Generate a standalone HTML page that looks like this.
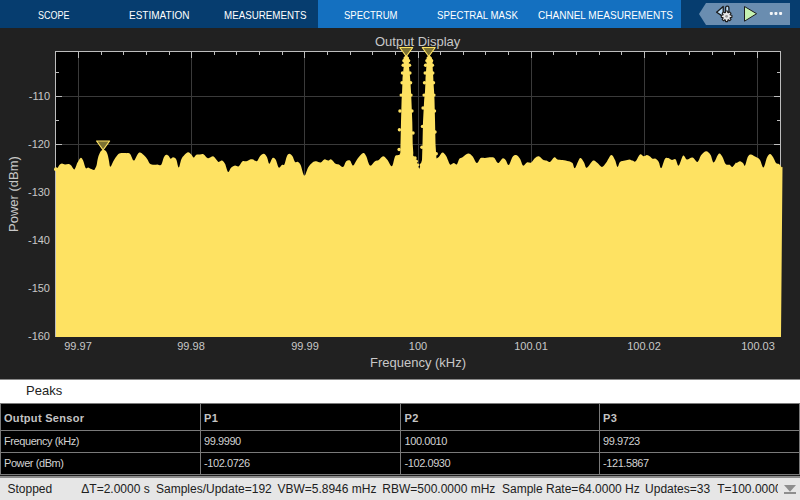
<!DOCTYPE html>
<html><head><meta charset="utf-8">
<style>
*{margin:0;padding:0;box-sizing:border-box}
html,body{width:800px;height:500px;overflow:hidden;background:#212121;font-family:"Liberation Sans",sans-serif}
#hdr{position:absolute;left:0;top:0;width:800px;height:28px;background:#063d6f}
#hdr .lt{position:absolute;left:318px;top:0;width:363px;height:28px;background:#1470c0}
.tab{position:absolute;top:8px;color:#fff;font-size:11px;line-height:14px;white-space:nowrap;transform-origin:0 0}
.lbl{position:absolute;color:#c8c8c8;font-size:11px;line-height:12px;white-space:nowrap}
.yl{text-align:right;width:40px;left:10px}
.xl{text-align:center;width:60px}
#peaks{position:absolute;left:0;top:379px;width:800px;height:24px;background:#fff;border-top:1px solid #8a8a8a}
#peaks span{position:absolute;left:26px;top:3px;font-size:13px;color:#222}
#tbl{position:absolute;left:0;top:403px;width:800px;height:75px;background:#000}
.tc{position:absolute;color:#d2d2d2;font-size:11px;white-space:nowrap;line-height:12px;letter-spacing:-0.42px}
.b{font-weight:bold;color:#c4c4c4;letter-spacing:0.3px}
#status{position:absolute;left:0;top:478px;width:800px;height:22px;background:#e6e6e6;font-size:12px;color:#202020}
#status span{position:absolute;top:4px;white-space:pre;line-height:14px}
</style></head><body>
<div id="hdr">
 <div class="lt"></div>
 <div class="tab" style="left:37.5px;transform:scaleX(0.818)">SCOPE</div>
 <div class="tab" style="left:128.5px;transform:scaleX(0.911)">ESTIMATION</div>
 <div class="tab" style="left:223.5px;transform:scaleX(0.888)">MEASUREMENTS</div>
 <div class="tab" style="left:344px;transform:scaleX(0.867)">SPECTRUM</div>
 <div class="tab" style="left:436.5px;transform:scaleX(0.881)">SPECTRAL MASK</div>
 <div class="tab" style="left:538px;transform:scaleX(0.911)">CHANNEL MEASUREMENTS</div>
 <svg style="position:absolute;left:0;top:0" width="800" height="28">
  <polygon points="699,14 706,3 790,3 790,25 706,25" fill="#6a8db0"/>
  <g stroke="#1c1c1c" stroke-width="1" stroke-linejoin="round">
   <polygon points="716.6,12.2 723.2,6.5 723.2,16.6" fill="#bfe0fa" stroke-width="1.3"/>
   <rect x="725.6" y="6.2" width="3.3" height="7.2" rx="1.5" fill="#bfe0fa" stroke-width="1.3"/>
   <polygon points="725.36,12.60 725.57,11.00 727.63,11.00 727.84,12.60 728.34,12.81 729.62,11.82 731.08,13.28 730.09,14.56 730.30,15.06 731.90,15.27 731.90,17.33 730.30,17.54 730.09,18.04 731.08,19.32 729.62,20.78 728.34,19.79 727.84,20.00 727.63,21.60 725.57,21.60 725.36,20.00 724.86,19.79 723.58,20.78 722.12,19.32 723.11,18.04 722.90,17.54 721.30,17.33 721.30,15.27 722.90,15.06 723.11,14.56 722.12,13.28 723.58,11.82 724.86,12.81" fill="#e8e8e8" stroke-width="1.1"/>
   <circle cx="726.6" cy="16.3" r="1.4" fill="#9a9a9a" stroke="none"/>
   <polygon points="744.5,6.5 756.6,13.7 744.5,21.2" fill="#c6f3b2"/>
  </g>
  <g fill="#f4f6f8"><rect x="769.8" y="11.9" width="3" height="3" rx="0.8"/><rect x="774.4" y="11.9" width="3" height="3" rx="0.8"/><rect x="779.1" y="11.9" width="3" height="3" rx="0.8"/></g>
 </svg>
</div>
<svg style="position:absolute;left:0;top:28px" width="800" height="351" viewBox="0 28 800 351">
 <rect x="55" y="51" width="725" height="286" fill="#000"/>
 <path d="M78.5 51V337M191.5 51V337M304.5 51V337M418.5 51V337M531.5 51V337M644.5 51V337M757.5 51V337M55 96.5H780M55 144.5H780M55 192.5H780M55 240.5H780M55 288.5H780" stroke="#3a3a3a" stroke-width="1"/>
 <rect x="55.5" y="51.5" width="725" height="285" fill="none" stroke="#bdbdbd" stroke-width="1"/>
 <path d="M78.5 52v6M101.5 52v3M123.5 52v3M146.5 52v3M169.5 52v3M191.5 52v6M214.5 52v3M236.5 52v3M259.5 52v3M282.5 52v3M304.5 52v6M327.5 52v3M350.5 52v3M372.5 52v3M395.5 52v3M418.5 52v6M440.5 52v3M463.5 52v3M485.5 52v3M508.5 52v3M531.5 52v6M553.5 52v3M576.5 52v3M599.5 52v3M621.5 52v3M644.5 52v6M666.5 52v3M689.5 52v3M712.5 52v3M734.5 52v3M757.5 52v6M56 336.5h6M780 336.5h-6M56 312.5h3M780 312.5h-3M56 288.5h6M780 288.5h-6M56 264.5h3M780 264.5h-3M56 240.5h6M780 240.5h-6M56 216.5h3M780 216.5h-3M56 192.5h6M780 192.5h-6M56 168.5h3M780 168.5h-3M56 144.5h6M780 144.5h-6M56 120.5h3M780 120.5h-3M56 96.5h6M780 96.5h-6M56 72.5h3M780 72.5h-3" stroke="#bdbdbd" stroke-width="1"/>
 <path d="M56 337L56 168.75L55.00 168.75C55.42 168.65 56.77 168.75 57.50 168.12C58.23 167.50 58.65 165.77 59.38 165.00C60.10 164.23 60.94 163.60 61.88 163.50C62.81 163.40 63.85 164.29 65.00 164.38C66.15 164.46 67.71 163.79 68.75 164.00C69.79 164.21 70.31 164.73 71.25 165.62C72.19 166.52 73.33 169.90 74.38 169.38C75.42 168.85 76.46 164.42 77.50 162.50C78.54 160.58 79.69 158.19 80.62 157.88C81.56 157.56 82.29 158.92 83.12 160.62C83.96 162.33 84.79 166.98 85.62 168.12C86.46 169.27 87.29 167.40 88.12 167.50C88.96 167.60 89.69 168.33 90.62 168.75C91.56 169.17 93.09 169.89 93.75 170.00C94.41 170.11 94.14 170.15 94.60 169.40C95.06 168.65 96.02 167.07 96.50 165.50C96.98 163.93 97.17 161.58 97.50 160.00C97.83 158.42 98.08 157.25 98.50 156.00C98.92 154.75 99.50 153.42 100.00 152.50C100.50 151.58 100.93 150.95 101.50 150.50C102.07 150.05 102.77 149.80 103.40 149.80C104.03 149.80 104.73 150.05 105.30 150.50C105.87 150.95 106.35 151.58 106.80 152.50C107.25 153.42 107.63 154.58 108.00 156.00C108.37 157.42 108.60 159.20 109.00 161.00C109.40 162.80 109.61 166.86 110.40 166.80C111.19 166.74 112.57 162.59 113.75 160.62C114.93 158.66 116.25 156.25 117.50 155.00C118.75 153.75 119.79 153.44 121.25 153.12C122.71 152.81 124.79 153.02 126.25 153.12C127.71 153.23 128.75 152.50 130.00 153.75C131.25 155.00 132.50 160.52 133.75 160.62C135.00 160.73 136.46 155.73 137.50 154.38C138.54 153.02 138.96 152.40 140.00 152.50C141.04 152.60 142.50 153.85 143.75 155.00C145.00 156.15 146.46 157.92 147.50 159.38C148.54 160.83 148.96 162.85 150.00 163.75C151.04 164.65 152.50 164.65 153.75 164.75C155.00 164.85 156.25 164.38 157.50 164.38C158.75 164.38 160.21 165.90 161.25 164.75C162.29 163.60 162.92 159.17 163.75 157.50C164.58 155.83 165.42 155.00 166.25 154.75C167.08 154.50 168.02 155.33 168.75 156.00C169.48 156.67 169.90 158.54 170.62 158.75C171.35 158.96 172.19 157.15 173.12 157.25C174.06 157.35 175.31 157.67 176.25 159.38C177.19 161.08 177.92 167.50 178.75 167.50C179.58 167.50 180.31 161.46 181.25 159.38C182.19 157.29 183.23 156.19 184.38 155.00C185.52 153.81 186.98 152.35 188.12 152.25C189.27 152.15 190.31 153.50 191.25 154.38C192.19 155.25 192.92 157.44 193.75 157.50C194.58 157.56 195.21 155.27 196.25 154.75C197.29 154.23 198.75 154.44 200.00 154.38C201.25 154.31 202.50 153.75 203.75 154.38C205.00 155.00 206.46 157.60 207.50 158.12C208.54 158.65 209.06 157.81 210.00 157.50C210.94 157.19 212.08 155.94 213.12 156.25C214.17 156.56 215.31 158.44 216.25 159.38C217.19 160.31 217.81 161.67 218.75 161.88C219.69 162.08 220.83 160.31 221.88 160.62C222.92 160.94 223.96 161.88 225.00 163.75C226.04 165.62 227.08 171.25 228.12 171.88C229.17 172.50 230.10 168.54 231.25 167.50C232.40 166.46 233.75 165.83 235.00 165.62C236.25 165.42 237.50 166.98 238.75 166.25C240.00 165.52 241.25 162.08 242.50 161.25C243.75 160.42 245.00 161.56 246.25 161.25C247.50 160.94 248.85 159.69 250.00 159.38C251.15 159.06 251.98 159.06 253.12 159.38C254.27 159.69 255.73 161.77 256.88 161.25C258.02 160.73 258.85 157.50 260.00 156.25C261.15 155.00 262.60 153.65 263.75 153.75C264.90 153.85 265.94 155.21 266.88 156.88C267.81 158.54 268.44 163.54 269.38 163.75C270.31 163.96 271.46 158.85 272.50 158.12C273.54 157.40 274.58 157.81 275.62 159.38C276.67 160.94 277.71 166.56 278.75 167.50C279.79 168.44 280.94 165.52 281.88 165.00C282.81 164.48 283.54 165.83 284.38 164.38C285.21 162.92 286.04 158.02 286.88 156.25C287.71 154.48 288.44 153.75 289.38 153.75C290.31 153.75 291.56 154.90 292.50 156.25C293.44 157.60 294.06 160.94 295.00 161.88C295.94 162.81 297.19 161.35 298.12 161.88C299.06 162.40 299.58 162.71 300.62 165.00C301.67 167.29 303.12 175.21 304.38 175.62C305.62 176.04 306.77 169.69 308.12 167.50C309.48 165.31 311.15 163.54 312.50 162.50C313.85 161.46 314.90 161.25 316.25 161.25C317.60 161.25 319.27 162.81 320.62 162.50C321.98 162.19 323.12 159.69 324.38 159.38C325.62 159.06 326.98 160.62 328.12 160.62C329.27 160.62 330.00 158.85 331.25 159.38C332.50 159.90 334.38 162.92 335.62 163.75C336.88 164.58 337.50 163.85 338.75 164.38C340.00 164.90 341.88 167.40 343.12 166.88C344.38 166.35 345.10 162.29 346.25 161.25C347.40 160.21 348.85 159.90 350.00 160.62C351.15 161.35 351.88 165.94 353.12 165.62C354.38 165.31 355.83 160.83 357.50 158.75C359.17 156.67 361.67 153.54 363.12 153.12C364.58 152.71 365.10 154.17 366.25 156.25C367.40 158.33 368.54 164.79 370.00 165.62C371.46 166.46 373.54 162.19 375.00 161.25C376.46 160.31 377.40 160.83 378.75 160.00C380.10 159.17 381.67 156.25 383.12 156.25C384.58 156.25 386.04 158.33 387.50 160.00C388.96 161.67 390.62 166.83 391.88 166.25C393.12 165.67 394.06 158.34 395.00 156.50C395.94 154.66 396.78 155.45 397.50 155.20C398.22 154.95 399.00 155.03 399.30 155.00L400.30 153.00L400.50 144.00L401.00 122.00L401.60 100.00L402.10 91.60L402.40 83.00L402.50 78.00L403.00 73.00L403.80 66.00L403.70 61.00L403.50 57.50L405.00 56.00L407.30 56.00L409.00 57.50L408.90 61.00L408.90 66.00L409.70 73.00L410.10 78.00L410.50 83.00L411.00 91.60L411.40 100.00L412.30 122.00L412.70 144.00L413.30 153.00L413.12 155.62C413.54 156.15 414.90 157.19 415.62 158.75C416.35 160.31 416.88 163.33 417.50 165.00C418.12 166.67 419.06 168.12 419.38 168.75L422.00 160.00L422.50 144.00L423.00 122.00L424.15 100.00L425.00 91.60L425.40 83.00L425.50 78.00L425.90 73.00L426.40 66.00L426.70 61.00L426.50 57.50L428.00 56.00L430.20 56.00L431.80 57.50L432.50 61.00L432.60 66.00L433.00 73.00L433.30 78.00L433.50 83.00L434.10 91.60L434.50 100.00L435.05 122.00L435.50 144.00L436.00 152.00L436.50 158.50C436.88 158.25 437.80 158.00 438.80 157.00C439.80 156.00 441.26 152.62 442.50 152.50C443.74 152.38 445.00 154.27 446.25 156.25C447.50 158.23 448.75 163.23 450.00 164.38C451.25 165.52 452.60 163.12 453.75 163.12C454.90 163.12 455.94 165.10 456.88 164.38C457.81 163.65 458.44 159.94 459.38 158.75C460.31 157.56 461.04 158.12 462.50 157.25C463.96 156.38 466.46 153.67 468.12 153.50C469.79 153.33 471.04 154.65 472.50 156.25C473.96 157.85 475.52 162.81 476.88 163.12C478.23 163.44 479.27 159.00 480.62 158.12C481.98 157.25 483.23 158.02 485.00 157.88C486.77 157.73 489.69 157.21 491.25 157.25C492.81 157.29 493.23 157.15 494.38 158.12C495.52 159.10 496.77 163.06 498.12 163.12C499.48 163.19 501.25 159.02 502.50 158.50C503.75 157.98 504.58 158.92 505.62 160.00C506.67 161.08 507.60 165.52 508.75 165.00C509.90 164.48 511.25 158.54 512.50 156.88C513.75 155.21 515.00 154.69 516.25 155.00C517.50 155.31 518.85 156.98 520.00 158.75C521.15 160.52 521.98 165.00 523.12 165.62C524.27 166.25 525.52 163.02 526.88 162.50C528.23 161.98 529.90 163.23 531.25 162.50C532.60 161.77 533.75 159.17 535.00 158.12C536.25 157.08 537.40 155.98 538.75 156.25C540.10 156.52 541.88 159.02 543.12 159.75C544.38 160.48 545.10 160.27 546.25 160.62C547.40 160.98 548.65 162.44 550.00 161.88C551.35 161.31 553.12 157.67 554.38 157.25C555.62 156.83 556.15 158.92 557.50 159.38C558.85 159.83 560.62 159.69 562.50 160.00C564.38 160.31 567.08 160.73 568.75 161.25C570.42 161.77 571.46 161.98 572.50 163.12C573.54 164.27 573.75 168.96 575.00 168.12C576.25 167.29 578.54 159.17 580.00 158.12C581.46 157.08 582.60 160.27 583.75 161.88C584.90 163.48 585.31 167.96 586.88 167.75C588.44 167.54 591.35 161.40 593.12 160.62C594.90 159.85 596.04 162.08 597.50 163.12C598.96 164.17 600.42 166.98 601.88 166.88C603.33 166.77 604.69 164.48 606.25 162.50C607.81 160.52 609.79 155.42 611.25 155.00C612.71 154.58 613.96 158.02 615.00 160.00C616.04 161.98 616.67 166.56 617.50 166.88C618.33 167.19 618.75 162.92 620.00 161.88C621.25 160.83 623.44 161.04 625.00 160.62C626.56 160.21 628.12 159.38 629.38 159.38C630.62 159.38 631.46 160.31 632.50 160.62C633.54 160.94 634.38 162.29 635.62 161.25C636.88 160.21 638.65 155.21 640.00 154.38C641.35 153.54 642.60 156.15 643.75 156.25C644.90 156.35 645.83 154.96 646.88 155.00C647.92 155.04 649.06 155.88 650.00 156.50C650.94 157.12 651.56 158.38 652.50 158.75C653.44 159.12 654.58 158.23 655.62 158.75C656.67 159.27 657.81 160.31 658.75 161.88C659.69 163.44 660.21 168.65 661.25 168.12C662.29 167.60 663.85 160.42 665.00 158.75C666.15 157.08 666.98 157.92 668.12 158.12C669.27 158.33 670.62 159.79 671.88 160.00C673.12 160.21 674.48 158.44 675.62 159.38C676.77 160.31 677.50 166.25 678.75 165.62C680.00 165.00 681.77 156.67 683.12 155.62C684.48 154.58 685.31 159.06 686.88 159.38C688.44 159.69 690.73 157.08 692.50 157.50C694.27 157.92 696.04 162.29 697.50 161.88C698.96 161.46 699.79 156.77 701.25 155.00C702.71 153.23 704.69 151.25 706.25 151.25C707.81 151.25 709.38 153.12 710.62 155.00C711.88 156.88 712.40 162.71 713.75 162.50C715.10 162.29 717.29 154.69 718.75 153.75C720.21 152.81 721.35 155.17 722.50 156.88C723.65 158.58 724.48 162.69 725.62 164.00C726.77 165.31 728.65 164.58 729.38 164.75C730.10 164.92 729.48 164.65 730.00 165.00C730.52 165.35 731.50 167.29 732.50 166.88C733.50 166.46 735.38 163.12 736.00 162.50C736.62 161.88 735.58 163.34 736.25 163.12C736.92 162.91 738.88 161.22 740.00 161.20C741.12 161.18 742.17 162.28 743.00 163.00C743.83 163.72 744.17 166.58 745.00 165.50C745.83 164.42 747.00 158.33 748.00 156.50C749.00 154.67 750.00 154.58 751.00 154.50C752.00 154.42 753.00 155.50 754.00 156.00C755.00 156.50 756.00 156.83 757.00 157.50C758.00 158.17 758.92 158.33 760.00 160.00C761.08 161.67 762.33 167.92 763.50 167.50C764.67 167.08 765.92 159.75 767.00 157.50C768.08 155.25 769.00 154.08 770.00 154.00C771.00 153.92 772.00 155.50 773.00 157.00C774.00 158.50 775.00 161.83 776.00 163.00C777.00 164.17 778.08 163.33 779.00 164.00C779.92 164.67 780.92 166.50 781.50 167.00C782.08 167.50 782.33 167.00 782.50 167.00L781 337Z" fill="#fee262"/>
 <g fill="#fee262"><circle cx="403.20" cy="65.20" r="1.7"/><circle cx="402.50" cy="73.00" r="1.7"/><circle cx="402.10" cy="82.80" r="1.7"/><circle cx="401.20" cy="95.10" r="1.7"/><circle cx="399.95" cy="111.00" r="1.7"/><circle cx="399.40" cy="129.70" r="1.7"/><circle cx="399.10" cy="149.50" r="1.7"/><circle cx="403.90" cy="60.80" r="1.7"/><circle cx="409.50" cy="65.20" r="1.7"/><circle cx="409.90" cy="73.00" r="1.7"/><circle cx="410.60" cy="82.80" r="1.7"/><circle cx="411.00" cy="95.10" r="1.7"/><circle cx="411.95" cy="111.00" r="1.7"/><circle cx="413.05" cy="133.00" r="1.7"/><circle cx="408.60" cy="60.80" r="1.7"/><circle cx="425.60" cy="65.20" r="1.7"/><circle cx="425.20" cy="73.00" r="1.7"/><circle cx="424.50" cy="82.80" r="1.7"/><circle cx="424.10" cy="95.10" r="1.7"/><circle cx="423.05" cy="108.00" r="1.7"/><circle cx="422.50" cy="126.40" r="1.7"/><circle cx="421.95" cy="147.30" r="1.7"/><circle cx="426.90" cy="60.80" r="1.7"/><circle cx="432.40" cy="65.20" r="1.7"/><circle cx="432.80" cy="73.00" r="1.7"/><circle cx="433.50" cy="82.80" r="1.7"/><circle cx="433.90" cy="95.10" r="1.7"/><circle cx="434.50" cy="111.00" r="1.7"/><circle cx="435.05" cy="132.00" r="1.7"/><circle cx="431.60" cy="60.80" r="1.7"/><circle cx="415.00" cy="158.00" r="1.7"/><circle cx="416.25" cy="161.25" r="1.7"/><circle cx="417.50" cy="165.00" r="1.7"/><circle cx="421.25" cy="165.00" r="1.7"/><circle cx="436.25" cy="153.75" r="1.7"/><circle cx="436.25" cy="163.75" r="1.7"/><circle cx="56" cy="169.3" r="2"/></g>
 <g fill="#7b7132" stroke="#fee262" stroke-width="1.2" stroke-linejoin="round">
  <polygon points="399.8,47.5 412.7,47.5 406.25,56.5"/>
  <polygon points="422.3,47.5 435.2,47.5 428.75,56.5"/>
  <polygon points="96.6,141 109.6,141 103.1,150"/>
 </g>
</svg>
<div class="lbl" style="left:375px;top:35px;font-size:13px;line-height:14px">Output Display</div>
<div class="lbl yl" style="top:90.0px">-110</div>
<div class="lbl yl" style="top:138.0px">-120</div>
<div class="lbl yl" style="top:186.0px">-130</div>
<div class="lbl yl" style="top:234.0px">-140</div>
<div class="lbl yl" style="top:282.0px">-150</div>
<div class="lbl yl" style="top:330.0px">-160</div>
<div class="lbl xl" style="left:48px;top:340px">99.97</div>
<div class="lbl xl" style="left:161px;top:340px">99.98</div>
<div class="lbl xl" style="left:275px;top:340px">99.99</div>
<div class="lbl xl" style="left:388px;top:340px">100</div>
<div class="lbl xl" style="left:501px;top:340px">100.01</div>
<div class="lbl xl" style="left:614px;top:340px">100.02</div>
<div class="lbl xl" style="left:728px;top:340px">100.03</div>
<div class="lbl" style="left:370px;top:356px;font-size:13px;line-height:14px">Frequency (kHz)</div>
<div class="lbl" style="left:14px;top:193.5px;font-size:13px;line-height:14px;transform:translate(-50%,-50%) rotate(-90deg)">Power (dBm)</div>
<div id="peaks"><span>Peaks</span></div>
<div id="tbl">
 <svg width="800" height="75" style="position:absolute;left:0;top:0">
  <g stroke="#7a7a7a" fill="none">
   <path d="M0 0.5H800M0 27.5H800M0 49.5H800M0 71.5H800M0.5 0V72M200.5 0V72M400.5 0V72M599.5 0V72M799.5 0V72"/>
   <path d="M0 72.5H800" stroke="#1e1e1e"/><path d="M0 73.5H800M0 74.5H800" stroke="#8c8c8c"/>
  </g>
 </svg>
 <div class="tc b" style="left:4px;top:9px">Output Sensor</div>
 <div class="tc b" style="left:204px;top:9px">P1</div>
 <div class="tc b" style="left:404.5px;top:9px">P2</div>
 <div class="tc b" style="left:603px;top:9px">P3</div>
 <div class="tc" style="left:4px;top:32px">Frequency (kHz)</div>
 <div class="tc" style="left:204px;top:32px">99.9990</div>
 <div class="tc" style="left:404.5px;top:32px">100.0010</div>
 <div class="tc" style="left:603px;top:32px">99.9723</div>
 <div class="tc" style="left:4px;top:54px">Power (dBm)</div>
 <div class="tc" style="left:204px;top:54px">-102.0726</div>
 <div class="tc" style="left:404.5px;top:54px">-102.0930</div>
 <div class="tc" style="left:603px;top:54px">-121.5867</div>
</div>
<div id="status">
 <span style="left:7.5px">Stopped</span>
 <span style="left:81.3px">ΔT=2.0000 s</span>
 <span style="left:156px">Samples/Update=192</span>
 <span style="left:277.4px">VBW=5.8946 mHz</span>
 <span style="left:382.3px">RBW=500.0000 mHz</span>
 <span style="left:502px">Sample Rate=64.0000 Hz</span>
 <span style="left:645.1px">Updates=33</span>
 <span style="left:717.2px;width:61px;overflow:hidden">T=100.0000 s</span>
 <svg style="position:absolute;left:0;top:0" width="800" height="22"><polygon points="784,7 796,7 790,13.8" fill="#8e8e8e"/><rect x="784" y="14" width="12" height="2" fill="#8e8e8e"/></svg>
</div>
</body></html>
